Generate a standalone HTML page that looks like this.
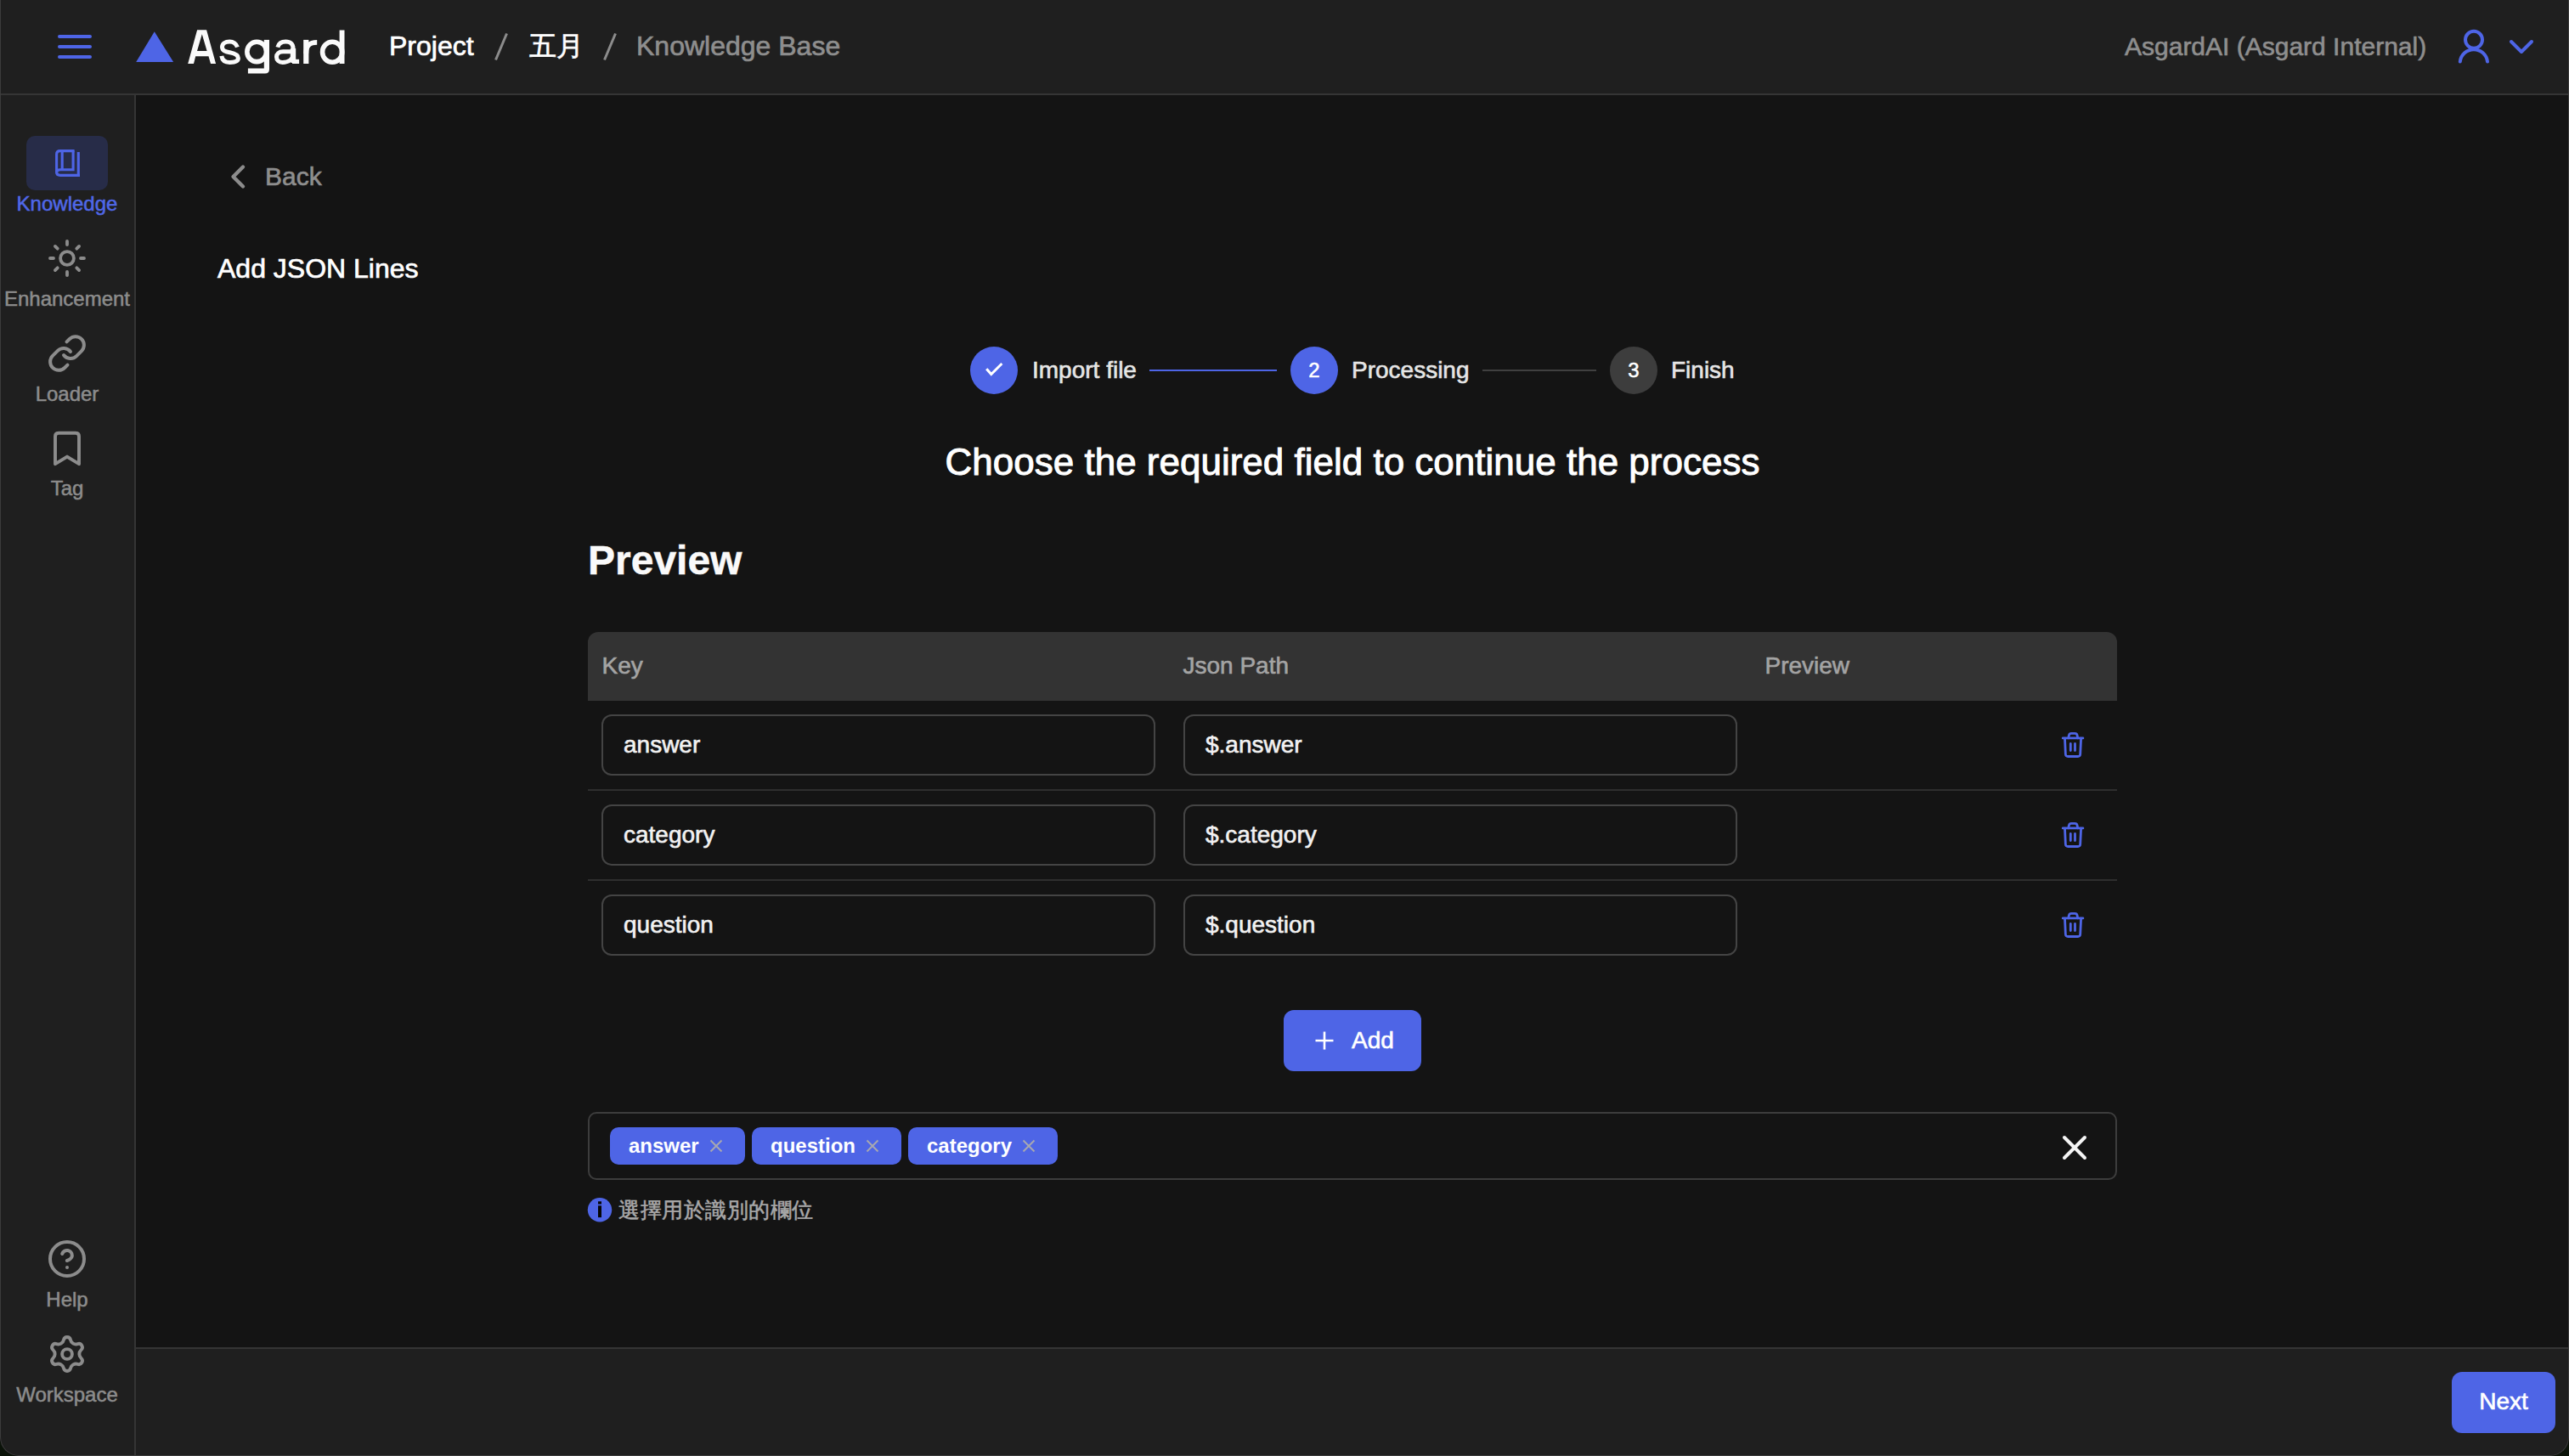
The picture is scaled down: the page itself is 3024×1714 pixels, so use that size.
<!DOCTYPE html>
<html><head><meta charset="utf-8">
<style>
html,body{margin:0;padding:0;}
body{width:3024px;height:1714px;background:#0b1309;overflow:hidden;position:relative;font-family:"Liberation Sans",sans-serif;}
#win{position:absolute;left:0;top:0;width:3024px;height:1714px;background:#1f1f1f;border-radius:0 0 22px 22px;overflow:hidden;}
.a{position:absolute;}
.t{position:absolute;line-height:1;white-space:nowrap;-webkit-text-stroke:0.022em currentColor;}
#hdr{left:0;top:0;width:3024px;height:110px;background:#1f1f1f;border-bottom:2px solid #353535;}
#side{left:0;top:112px;width:158px;height:1602px;background:#1f1f1f;border-right:2px solid #353535;}
#main{left:160px;top:112px;width:2864px;height:1474px;background:#141414;}
#foot{left:160px;top:1586px;width:2864px;height:128px;background:#1f1f1f;border-top:2px solid #353535;}
#edge{left:0;top:0;width:3024px;height:1714px;box-sizing:border-box;border:1px solid #3c3c3c;border-top:none;border-radius:0 0 22px 22px;}
.gray{color:#8e8e8e;}
.sl{position:absolute;left:0;width:158px;text-align:center;font-size:24px;line-height:1;color:#8c8c8c;-webkit-text-stroke:0.022em currentColor;}
.inp{position:absolute;box-sizing:border-box;width:652px;height:72px;border:2px solid #444444;border-radius:12px;}
.inp span{position:absolute;left:24px;top:0;line-height:68px;font-size:28px;color:#f2f2f2;-webkit-text-stroke:0.022em currentColor;}
.div{position:absolute;left:692px;width:1800px;height:2px;background:#2e2e2e;}
.tag{position:absolute;top:1327px;height:44px;border-radius:10px;background:#4e65e6;}
.tag span{position:absolute;left:22px;top:0;line-height:44px;font-size:24px;font-weight:bold;color:#fff;}
.num{position:absolute;width:56px;top:408px;text-align:center;line-height:56px;font-size:24px;color:#fff;-webkit-text-stroke:0.022em currentColor;}
</style></head><body>
<div id="win">
  <div id="hdr" class="a"></div>
  <div id="side" class="a"></div>
  <div id="main" class="a"></div>
  <div id="foot" class="a"></div>

  <!-- table header bg -->
  <div class="a" style="left:692px;top:744px;width:1800px;height:81px;background:#333333;border-radius:12px 12px 0 0;"></div>
  <div class="inp" style="left:708px;top:841px;"><span>answer</span></div>
  <div class="inp" style="left:1393px;top:841px;"><span>$.answer</span></div>
  <div class="div" style="top:929px;"></div>
  <div class="inp" style="left:708px;top:947px;"><span>category</span></div>
  <div class="inp" style="left:1393px;top:947px;"><span>$.category</span></div>
  <div class="div" style="top:1035px;"></div>
  <div class="inp" style="left:708px;top:1053px;"><span>question</span></div>
  <div class="inp" style="left:1393px;top:1053px;"><span>$.question</span></div>

  <!-- add button -->
  <div class="a" style="left:1511px;top:1189px;width:162px;height:72px;border-radius:12px;background:#4e65e6;"></div>
  <!-- tags box -->
  <div class="a" style="left:692px;top:1309px;width:1800px;height:80px;box-sizing:border-box;border:2px solid #3d3d3d;border-radius:10px;"></div>
  <div class="tag" style="left:718px;width:159px;"><span>answer</span><svg style="position:absolute;left:116px;top:13px" width="18" height="18"><path d="M2.5 2.5 L15.5 15.5 M15.5 2.5 L2.5 15.5" stroke="#a8a8b0" stroke-width="1.9"/></svg></div>
  <div class="tag" style="left:885px;width:176px;"><span>question</span><svg style="position:absolute;left:133px;top:13px" width="18" height="18"><path d="M2.5 2.5 L15.5 15.5 M15.5 2.5 L2.5 15.5" stroke="#a8a8b0" stroke-width="1.9"/></svg></div>
  <div class="tag" style="left:1069px;width:176px;"><span>category</span><svg style="position:absolute;left:133px;top:13px" width="18" height="18"><path d="M2.5 2.5 L15.5 15.5 M15.5 2.5 L2.5 15.5" stroke="#a8a8b0" stroke-width="1.9"/></svg></div>
  <!-- footer button -->
  <div class="a" style="left:2886px;top:1615px;width:122px;height:72px;border-radius:12px;background:#4e65e6;"></div>

<svg class="a" style="left:0;top:0" width="3024" height="1714" viewBox="0 0 3024 1714">
<!-- hamburger -->
<g stroke="#4e65e6" stroke-width="4" stroke-linecap="round"><path d="M70 43H106M70 55H106M70 67H106"/></g>
<!-- triangle logo -->
<polygon points="181.8,37.3 160.2,73 204.1,73" fill="#4e65e6"/>
<!-- Asgard glyphs -->
<g fill="#fafafa">
<path fill-rule="evenodd" d="M221.2 75L232.1 35.25H243.1L254.1 75H248L245.5 66.2H230.2L228 75Z M237.8 40.2L243.6 59.9H232Z"/>
<rect x="310.8" y="46.9" width="6.2" height="35"/>
<path d="M317 80V81.5Q317 86.5 312 86.5H291.9V80.5H317Z"/>
<rect x="399.6" y="35.5" width="5.9" height="39.5"/>
<rect x="344" y="69.8" width="8.1" height="5.2"/>
</g>
<g fill="none" stroke="#fafafa">
<path stroke-width="5" d="M279.4 55.4C278.2 51.5 274.6 48.9 270.3 48.9C265 48.9 261.5 51.6 261.5 55.3C261.5 59.8 265.5 60.8 270.5 61.8C276.5 63 280.4 64.8 280.4 68.5C280.4 72.5 276 73.4 270.5 73.4C265 73.4 261.6 71 260.8 65.8"/>
<ellipse stroke-width="5.6" cx="302.25" cy="60.9" rx="11.4" ry="11.7"/>
<path stroke-width="5" d="M326.9 55.6C328 51.5 331.5 49.1 336.3 49.1C342 49.1 345 52 345 57V74"/>
<path stroke-width="6.4" d="M345 57V72"/>
<path stroke-width="5" d="M345 60.7H333.2C328.2 60.7 325.5 63.5 325.5 67C325.5 71 328.5 73.4 332.6 73.4C339.5 73.4 345 70 345 64.5"/>
<path stroke-width="6.2" d="M360.3 46.9V75"/>
<path stroke-width="5.8" d="M360.3 63C360.3 54 364 49.9 373.2 49.9"/>
<ellipse stroke-width="5.6" cx="391.15" cy="61.2" rx="11.6" ry="12"/>
</g>
<!-- breadcrumb slashes -->
<g stroke="#8c8c8c" stroke-width="3"><path d="M596.5 39.5L583.5 70.5M724.5 39.5L711.5 70.5"/></g>
<!-- user + chevron -->
<g fill="none" stroke="#4e65e6" stroke-width="4" stroke-linecap="round" stroke-linejoin="round">
<circle cx="2912" cy="46.8" r="10"/>
<path d="M2895.8 72.6A16.2 16.2 0 0 1 2928 72.6"/>
<path d="M2956 49L2968 61L2980 49"/>
</g>
<!-- sidebar active bg -->
<rect x="31" y="160" width="96" height="64" rx="10" fill="#272c48"/>
<!-- book -->
<g fill="none" stroke="#4e65e6" stroke-width="3.1">
<path d="M73.2 177.6V199.8"/>
<path d="M86.1 177.6V199.8H71Q66.6 199.8 66.6 203.1Q66.6 206.4 71 206.4H94"/>
<path d="M66.6 203.5V181.6Q66.6 177.6 70.6 177.6H87.6"/>
<path d="M92.3 179V206.4"/>
</g>
<!-- sun -->
<g fill="none" stroke="#8c8c8c" stroke-width="3.8" stroke-linecap="round">
<circle cx="79" cy="304" r="7.9"/>
<path d="M79 284V288M79 320V324M59 304H63M95 304H99M64.9 289.9L67.7 292.7M90.3 315.3L93.1 318.1M64.9 318.1L67.7 315.3M90.3 292.7L93.1 289.9"/>
</g>
<!-- link (feather) -->
<g transform="translate(55 392) scale(2)" fill="none" stroke="#8c8c8c" stroke-width="2" stroke-linecap="round" stroke-linejoin="round">
<path d="M10 13a5 5 0 0 0 7.54.54l3-3a5 5 0 0 0-7.07-7.07l-1.72 1.71"/>
<path d="M14 11a5 5 0 0 0-7.54-.54l-3 3a5 5 0 0 0 7.07 7.07l1.71-1.71"/>
</g>
<!-- bookmark -->
<path d="M65 546.2V513.8Q65 509.8 69 509.8H89Q93 509.8 93 513.8V546.2L79 537.6Z" fill="none" stroke="#8c8c8c" stroke-width="3.9" stroke-linejoin="round"/>
<!-- help -->
<g transform="translate(55 1458) scale(2)" fill="none" stroke="#8c8c8c" stroke-width="2" stroke-linecap="round" stroke-linejoin="round">
<circle cx="12" cy="12" r="10"/><path d="M9.09 9a3 3 0 0 1 5.83 1c0 2-3 3-3 3"/><path d="M12 17h.01"/>
</g>
<!-- gear -->
<g fill="none" stroke="#8c8c8c" stroke-width="3.9" stroke-linejoin="round">
<path d="M74.941 1577.286 A4.150 4.150 0 0 1 83.059 1577.286 A6.518 6.518 0 0 0 91.446 1582.128 A4.150 4.150 0 0 1 95.505 1589.158 A6.518 6.518 0 0 0 95.505 1598.842 A4.150 4.150 0 0 1 91.446 1605.872 A6.518 6.518 0 0 0 83.059 1610.714 A4.150 4.150 0 0 1 74.941 1610.714 A6.518 6.518 0 0 0 66.554 1605.872 A4.150 4.150 0 0 1 62.495 1598.842 A6.518 6.518 0 0 0 62.495 1589.158 A4.150 4.150 0 0 1 66.554 1582.128 A6.518 6.518 0 0 0 74.941 1577.286 Z"/><circle cx="79" cy="1594" r="5.9"/>
</g>
<!-- back chevron -->
<path d="M286 196.5L274.5 208L286 219.5" fill="none" stroke="#8c8c8c" stroke-width="4.4" stroke-linecap="round" stroke-linejoin="round"/>
<!-- stepper -->
<circle cx="1170" cy="436" r="28" fill="#4e65e6"/>
<path d="M1162.2 435.3L1166.8 440.6L1178.3 429.1" fill="none" stroke="#fff" stroke-width="3" stroke-linecap="square"/>
<rect x="1353" y="435" width="150" height="2" fill="#4e65e6"/>
<circle cx="1547" cy="436" r="28" fill="#4e65e6"/>
<rect x="1745" y="435" width="134" height="2" fill="#404040"/>
<circle cx="1923" cy="436" r="28" fill="#3d3d3d"/>
<!-- trash -->
<g transform="translate(2415 850)" fill="none" stroke="#4e65e6" stroke-width="2.8" stroke-linecap="round" stroke-linejoin="round">
<path d="M13.2 18.9H36.9"/><path d="M19.8 18.9L20.4 15.6Q20.9 13.4 23.1 13.4H27.4Q29.6 13.4 30.1 15.6L30.7 18.9"/>
<path d="M15.5 19.2L16.4 38Q16.6 40.5 19.2 40.5H30.9Q33.5 40.5 33.7 38L34.6 19.2"/><path d="M22.3 25.4V33.6M27.5 25.4V33.6"/></g>
<g transform="translate(2415 956)" fill="none" stroke="#4e65e6" stroke-width="2.8" stroke-linecap="round" stroke-linejoin="round">
<path d="M13.2 18.9H36.9"/><path d="M19.8 18.9L20.4 15.6Q20.9 13.4 23.1 13.4H27.4Q29.6 13.4 30.1 15.6L30.7 18.9"/>
<path d="M15.5 19.2L16.4 38Q16.6 40.5 19.2 40.5H30.9Q33.5 40.5 33.7 38L34.6 19.2"/><path d="M22.3 25.4V33.6M27.5 25.4V33.6"/></g>
<g transform="translate(2415 1062)" fill="none" stroke="#4e65e6" stroke-width="2.8" stroke-linecap="round" stroke-linejoin="round">
<path d="M13.2 18.9H36.9"/><path d="M19.8 18.9L20.4 15.6Q20.9 13.4 23.1 13.4H27.4Q29.6 13.4 30.1 15.6L30.7 18.9"/>
<path d="M15.5 19.2L16.4 38Q16.6 40.5 19.2 40.5H30.9Q33.5 40.5 33.7 38L34.6 19.2"/><path d="M22.3 25.4V33.6M27.5 25.4V33.6"/></g>
<!-- add plus -->
<path d="M1559 1214.5V1235.5M1548.5 1225H1569.5" stroke="#fff" stroke-width="2.6"/>
<!-- clear X -->
<path d="M2430 1339L2454 1363M2454 1339L2430 1363" stroke="#f5f5f5" stroke-width="4" stroke-linecap="round"/>
<!-- info -->
<circle cx="706" cy="1424.2" r="14.2" fill="#4e65e6"/>
<rect x="704" y="1414.3" width="4" height="3.2" fill="#050505"/>
<rect x="704" y="1419.3" width="4" height="13.8" fill="#050505"/>
</svg>

  <!-- header text -->
  <div class="t" style="left:458px;top:38.4px;font-size:32px;color:#fff;">Project</div>
  <div class="t" style="left:623px;top:38.4px;font-size:32px;color:#fff;">五月</div>
  <div class="t gray" style="left:749px;top:38.4px;font-size:32px;">Knowledge Base</div>
  <div class="t gray" style="left:2501px;top:39.6px;font-size:30px;">AsgardAI (Asgard Internal)</div>

  <!-- sidebar labels -->
  <div class="sl" style="top:227.7px;color:#5068e8;">Knowledge</div>
  <div class="sl" style="top:339.5px;">Enhancement</div>
  <div class="sl" style="top:451.7px;">Loader</div>
  <div class="sl" style="top:563.4px;">Tag</div>
  <div class="sl" style="top:1517.7px;">Help</div>
  <div class="sl" style="top:1629.7px;">Workspace</div>

  <!-- main text -->
  <div class="t gray" style="left:312px;top:192.6px;font-size:30px;">Back</div>
  <div class="t" style="left:256px;top:299.9px;font-size:32px;color:#fff;">Add JSON Lines</div>

  <div class="t" style="left:1215px;top:421.8px;font-size:28px;color:#e6e6e6;">Import file</div>
  <div class="num" style="left:1519px;">2</div>
  <div class="t" style="left:1591px;top:421.8px;font-size:28px;color:#e6e6e6;">Processing</div>
  <div class="num" style="left:1895px;">3</div>
  <div class="t" style="left:1967px;top:421.8px;font-size:28px;color:#e6e6e6;">Finish</div>

  <div class="t" style="left:160px;width:2864px;text-align:center;top:521.8px;font-size:44px;color:#fff;">Choose the required field to continue the process</div>
  <div class="t" style="left:692px;top:636px;font-size:48px;font-weight:bold;color:#fafafa;-webkit-text-stroke:0.5px #fafafa;">Preview</div>

  <div class="t" style="left:708.5px;top:769.8px;font-size:28px;color:#a4a4a4;">Key</div>
  <div class="t" style="left:1392.5px;top:769.8px;font-size:28px;color:#a4a4a4;">Json Path</div>
  <div class="t" style="left:2077.5px;top:769.8px;font-size:28px;color:#a4a4a4;">Preview</div>

  <div class="t" style="left:1591px;top:1211px;font-size:28px;color:#fff;">Add</div>
  <div class="t" style="left:728px;top:1412.3px;font-size:25.2px;letter-spacing:0.55px;color:#a8a8a8;">選擇用於識別的欄位</div>
  <div class="t" style="left:2886px;width:122px;text-align:center;top:1636px;font-size:28px;color:#fff;">Next</div>

  <div id="edge" class="a"></div>
</div>
</body></html>
